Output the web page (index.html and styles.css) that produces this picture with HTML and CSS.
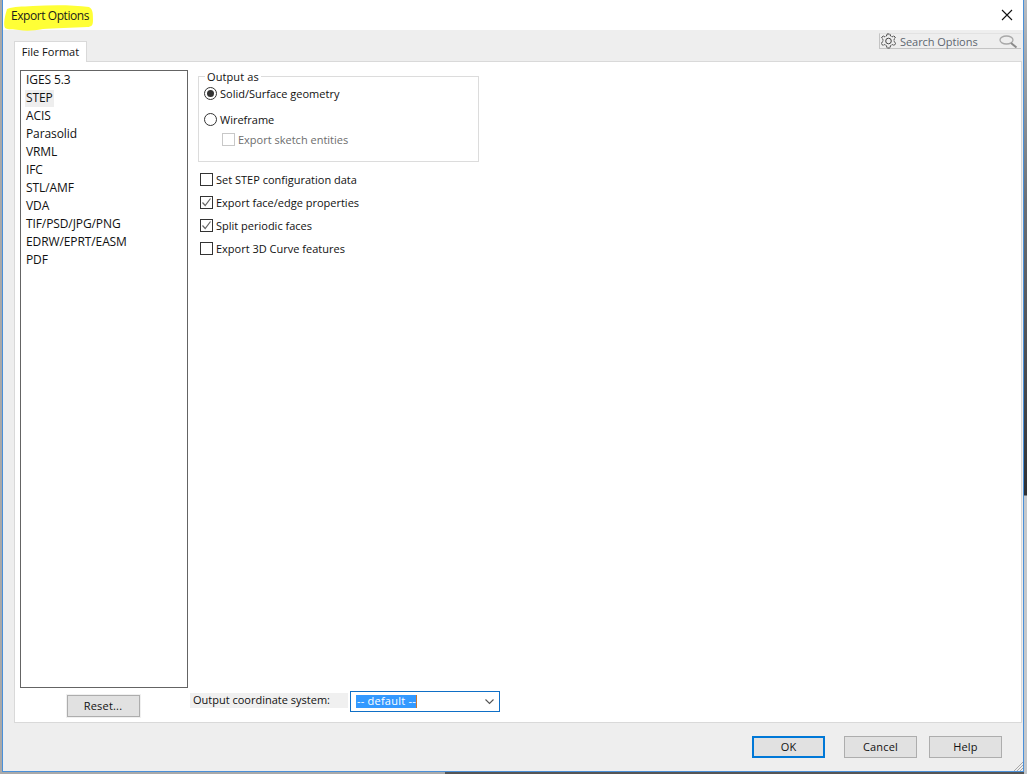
FILE: index.html
```html
<!DOCTYPE html>
<html lang="en">
<head>
<meta charset="utf-8">
<title>Export Options</title>
<link rel="stylesheet" href="styles.css">
</head>
<body>
<div class="window">
  <header class="titlebar">
    <svg class="marker" width="90" height="28" viewBox="0 0 90 28"><path d="M4 5 C12 2 18 3 30 2 C50 1 70 1 86 3 C90 5 90 10 90 16 C90 21 89 23 84 23 C70 24 50 24 40 25 C30 27 22 27 16 26 C10 25 5 26 2 24 C0 20 2 12 4 5Z"/></svg>
    <span class="title">Export Options</span>
    <svg class="close" width="12" height="12" viewBox="0 0 12 12"><path d="M1 1 L11 11 M11 1 L1 11"/></svg>
  </header>
  <div class="tabrow">
    <div class="tab">File Format</div>
    <div class="search">
      <svg class="gear" width="17" height="16" viewBox="0 0 17 16"><path d="M7 1 H10 L10.5 3 L12.2 3.8 L14 2.8 L15.5 5 L14 6.4 L14 8.6 L15.8 10 L14.3 12.4 L12.3 11.6 L10.5 12.6 L10 15 H7 L6.5 12.6 L4.7 11.6 L2.7 12.4 L1.2 10 L3 8.6 L3 6.4 L1.5 5 L3 2.8 L4.8 3.8 L6.5 3 Z"/><circle cx="8.5" cy="8" r="2.8"/></svg>
      <span class="search-text">Search Options</span>
      <svg class="lens" width="19" height="13" viewBox="0 0 19 13"><ellipse cx="7.5" cy="5" rx="6.5" ry="4"/><path class="handle" d="M12 8 L17.5 12.5"/></svg>
    </div>
  </div>
  <main class="panel">
    <div class="left">
      <ul class="list">
        <li>IGES 5.3</li>
        <li><span class="current">STEP</span></li>
        <li>ACIS</li>
        <li>Parasolid</li>
        <li>VRML</li>
        <li>IFC</li>
        <li>STL/AMF</li>
        <li>VDA</li>
        <li>TIF/PSD/JPG/PNG</li>
        <li>EDRW/EPRT/EASM</li>
        <li>PDF</li>
      </ul>
      <button class="btn reset">Reset...</button>
    </div>
    <div class="right">
      <fieldset class="group">
        <legend>Output as</legend>
        <div class="opt first"><span class="radio on"></span>Solid/Surface geometry</div>
        <div class="opt second"><span class="radio"></span>Wireframe</div>
        <div class="opt sub"><span class="box disabled"></span>Export sketch entities</div>
      </fieldset>
      <div class="checks">
        <div class="opt"><span class="box"></span>Set STEP configuration data</div>
        <div class="opt"><span class="box"><svg width="11" height="11" viewBox="0 0 11 11"><path d="M1.5 5.5 L4.2 8.5 L9.5 1.5"/></svg></span>Export face/edge properties</div>
        <div class="opt"><span class="box"><svg width="11" height="11" viewBox="0 0 11 11"><path d="M1.5 5.5 L4.2 8.5 L9.5 1.5"/></svg></span>Split periodic faces</div>
        <div class="opt"><span class="box"></span>Export 3D Curve features</div>
      </div>
      <div class="coord">
        <span class="coord-label">Output coordinate system:</span>
        <div class="select">
          <span class="selected">-- default --</span>
          <svg width="11" height="7" viewBox="0 0 11 7"><path d="M1.5 1.5 L5.5 5.5 L9.5 1.5"/></svg>
        </div>
      </div>
    </div>
  </main>
  <footer class="footer">
    <button class="btn default">OK</button>
    <button class="btn cancel">Cancel</button>
    <button class="btn help">Help</button>
  </footer>
  <svg class="grip" width="9" height="9" viewBox="0 0 9 9"><path d="M9 0 L0 9 M9 3 L3 9 M9 6 L6 9"/></svg>
</div>
</body>
</html>
```
FILE: styles.css
```css
* { box-sizing: border-box; }
html, body { margin: 0; height: 100%; }
body {
  width: 1027px;
  height: 774px;
  overflow: hidden;
  background:
    linear-gradient(#b9bec4 0, #8f959b 105px, #6a6f75 200px, #2e3033 495px, #c4c8cc 496px) right top / 3px 100% no-repeat,
    linear-gradient(90deg, #a9a9a9 445px, #555 445px) left bottom / 100% 3px no-repeat,
    #a9a9a9;
  font: 11px "Open Sans", "Noto Sans", sans-serif;
  color: #111;
}
.window {
  position: relative;
  margin-left: 2px;
  width: 1022px;
  height: 772px;
  background: #eee;
  border: 1px solid #4a90d9;
  border-top: 0;
  display: flex;
  flex-direction: column;
}
.titlebar {
  position: relative;
  height: 30px;
  flex: none;
  background: #fff;
  display: flex;
  align-items: center;
  justify-content: space-between;
  padding: 0 10px 0 8px;
  font-size: 12px;
}
.marker { position: absolute; left: 0; top: 4px; }
.marker path { fill: #ffff36; }
.title { position: relative; color: #1a1a1a; letter-spacing: -.43px; }
.close path { fill: none; stroke: #111; stroke-width: 1.1; }
.tabrow {
  height: 31px;
  flex: none;
  display: flex;
  justify-content: space-between;
  align-items: flex-start;
  padding: 3px 2px 0 11px;
  position: relative;
}
.tab {
  margin-top: 8px;
  width: 73px;
  height: 21px;
  background: #fff;
  border: 1px solid #d9d9d9;
  border-bottom: 0;
  text-align: center;
  line-height: 19px;
  position: relative;
  z-index: 1;
}
.search {
  width: 142px;
  height: 16px;
  border: 1px solid #c4c4c4;
  border-right: 0;
  border-top-color: #e2e2e2;
  display: flex;
  align-items: center;
  color: #5d6670;
  letter-spacing: -.05px;
}
.gear { margin: 0 3px 0 0; flex: none; }
.gear path, .gear circle { fill: none; stroke: #444; stroke-width: 1; stroke-dasharray: 2.4 .7; }
.gear circle { stroke-dasharray: none; }
.search-text { flex: 1; white-space: nowrap; }
.lens { flex: none; margin-right: 3px; }
.lens ellipse { fill: none; stroke: #a8a8a8; stroke-width: 1.3; }
.lens .handle { stroke: #8b8b8b; stroke-width: 2; }
.panel {
  flex: 1;
  margin: 0 1px 0 11px;
  background: #fff;
  border: 1px solid #d9d9d9;
  display: flex;
  padding: 8px 5px 5px;
  min-height: 0;
}
.left {
  width: 168px;
  flex: none;
  display: flex;
  flex-direction: column;
  align-items: center;
}
.list {
  list-style: none;
  margin: 0;
  padding: 0 0 0 5px;
  width: 100%;
  flex: 1;
  border: 1px solid #646464;
  letter-spacing: -.1px;
}
.list li { height: 18px; line-height: 17px; font-size: 12px; }
.current { display: inline-block; background: #eee; padding: 0 1px; height: 17px; line-height: 15px; margin-top: 1px; margin-left: -1px; }
.btn {
  font: inherit;
  font-size: 11px;
  letter-spacing: .2px;
  color: #111;
  width: 73px;
  height: 22px;
  padding: 0 0 2px;
  background: #e1e1e1;
  border: 1px solid #adadad;
  border-radius: 0;
}
.reset { margin: 7px 2px 0 0; flex: none; outline: 1px solid #f0f0f0; }
.right {
  flex: 1;
  display: flex;
  flex-direction: column;
  align-items: flex-start;
  padding-left: 2px;
  min-width: 0;
}
.group {
  margin: 0 0 0 8px;
  padding: 0;
  width: 281px;
  height: 92px;
  border: 1px solid #dcdcdc;
  position: relative;
}
.group legend { margin-left: 6px; padding: 0 2px; font-size: 11px; line-height: 13px; letter-spacing: .1px; }
.opt {
  display: flex;
  align-items: center;
  height: 13px;
  white-space: nowrap;
  letter-spacing: 0;
}
.group .opt { margin-left: 5px; }
.group .first { margin-top: 4px; }
.group .second { margin-top: 13px; }
.group .opt.sub { margin: 7px 0 0 23px; color: #6d6d6d; }
.radio {
  width: 13px;
  height: 13px;
  border: 1px solid #333;
  border-radius: 50%;
  margin-right: 3px;
  flex: none;
  display: flex;
  align-items: center;
  justify-content: center;
}
.radio.on::after { content: ""; width: 7px; height: 7px; border-radius: 50%; background: #333; }
.box {
  width: 13px;
  height: 13px;
  border: 1px solid #333;
  margin-right: 3px;
  flex: none;
  display: flex;
}
.box.disabled { border-color: #c8c8c8; }
.box svg { display: block; }
.box path { fill: none; stroke: #666; stroke-width: 1.2; }
.checks {
  margin: 11px 0 0 10px;
  display: flex;
  flex-direction: column;
  gap: 10px;
}
.coord {
  margin-top: auto;
  display: flex;
  align-items: flex-start;
  margin-bottom: 5px;
}
.coord-label {
  width: 158px;
  height: 15px;
  margin-top: 2px;
  background: #f0f0f0;
  padding-left: 3px;
  line-height: 13px;
  letter-spacing: 0;
  white-space: nowrap;
}
.select {
  margin-left: 2px;
  width: 150px;
  height: 21px;
  border: 1px solid #0f6fc6;
  display: flex;
  align-items: center;
  justify-content: space-between;
  padding: 0 4px 0 5px;
}
.selected {
  background: #39f;
  color: #fff;
  height: 13px;
  line-height: 12px;
  padding-left: 1px;
  letter-spacing: .22px;
  white-space: nowrap;
  border-right: 1px solid #c87533;
}
.select path { fill: none; stroke: #555; stroke-width: 1.1; }
.footer {
  height: 48px;
  flex: none;
  display: flex;
  padding: 13px 0 0 749px;
}
.footer .btn { font-size: 11px; }
.default { border: 2px solid #0078d7; }
.cancel { margin-left: 19px; }
.help { margin-left: 12px; }
.grip { position: absolute; right: 0; bottom: 0; }
.grip path { stroke: #a8a8a8; fill: none; }
```
